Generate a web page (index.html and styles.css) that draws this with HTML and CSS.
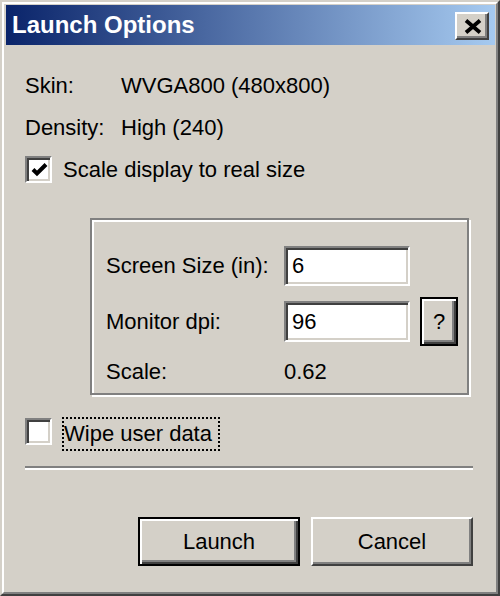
FILE: index.html
```html
<!DOCTYPE html>
<html>
<head>
<meta charset="utf-8">
<title>Launch Options</title>
<link rel="stylesheet" href="styles.css">
</head>
<body>
<div class="window">
  <div class="frame">
    <div class="titlebar">
      <span class="title">Launch Options</span>
      <button class="close" aria-label="Close">
        <svg width="18" height="15" viewBox="0 0 18 15"><path d="M2 1.5 L16 13.5 M16 1.5 L2 13.5" stroke="#000" stroke-width="3.8" fill="none"/></svg>
      </button>
    </div>
    <div class="content">
      <div class="info-row"><span class="info-label">Skin:</span><span>WVGA800 (480x800)</span></div>
      <div class="info-row"><span class="info-label">Density:</span><span>High (240)</span></div>
      <div class="check-row scale-row">
        <span class="checkbox"><svg width="17" height="14" viewBox="0 0 17 14"><polyline points="2,6.5 6,10.5 15,1.5" stroke="#000" stroke-width="4" fill="none"/></svg></span>
        <span>Scale display to real size</span>
      </div>
      <div class="group">
        <span class="label">Screen Size (in):</span>
        <input class="field field-1" type="text" value="6">
        <span></span>
        <span class="label">Monitor dpi:</span>
        <input class="field field-2" type="text" value="96">
        <button class="btn default help">?</button>
        <span class="label">Scale:</span>
        <span class="label">0.62</span>
        <span></span>
      </div>
      <div class="check-row wipe-row">
        <span class="checkbox wipe-box"></span>
        <span class="focus">Wipe user data</span>
      </div>
      <div class="separator"></div>
      <div class="buttons">
        <button class="btn default">Launch</button>
        <button class="btn">Cancel</button>
      </div>
    </div>
  </div>
</div>
</body>
</html>
```
FILE: styles.css
```css
* { box-sizing: border-box; }
html, body { margin: 0; padding: 0; }
body {
  width: 500px;
  height: 596px;
  background: #d4d0c8;
  font-family: "Liberation Sans", Arial, sans-serif;
  font-size: 22px;
  color: #000;
  overflow: hidden;
}
.window {
  width: 500px;
  height: 596px;
  border: 2px solid;
  border-color: #d4d0c8 #404040 #404040 #d4d0c8;
}
.frame {
  height: 100%;
  border: 2px solid;
  border-color: #fff #808080 #808080 #fff;
  padding: 1px 1px 2px 2px;
  display: flex;
  flex-direction: column;
}
.titlebar {
  height: 40px;
  flex: none;
  display: flex;
  align-items: center;
  justify-content: space-between;
  padding: 0 6px;
  background: linear-gradient(to right, #0a246a, #a6caf0);
}
.title {
  color: #fff;
  font-weight: bold;
  font-size: 24px;
  line-height: 40px;
}
.close {
  width: 34px;
  height: 28px;
  margin-top: 2px;
  padding: 0;
  background: #d4d0c8;
  border: 2px solid;
  border-color: #fff #404040 #404040 #fff;
  box-shadow: inset -2px -2px #808080;
  display: flex;
  align-items: center;
  justify-content: center;
}
.close svg { display: block; margin-left: 1px; }
.content {
  flex: 1;
  padding: 28px 22px 0 19px;
  display: flex;
  flex-direction: column;
}
.info-row {
  display: flex;
  line-height: 26px;
}
.info-row + .info-row { margin-top: 16px; }
.info-label { width: 96px; }
.check-row {
  display: flex;
  line-height: 26px;
}
.scale-row {
  margin-top: 15px;
  align-items: center;
  gap: 11px;
}
.checkbox {
  width: 27px;
  height: 27px;
  flex: none;
  border: 2px solid;
  border-color: #808080 #fff #fff #808080;
  background: #fff;
  box-shadow: inset 2px 2px #404040, inset -2px -2px #d4d0c8;
  display: flex;
  align-items: center;
  justify-content: center;
}
.checkbox svg { display: block; margin: 1px 0 0 2px; }
.group {
  margin-top: 35px;
  margin-left: 65px;
  width: 379px;
  height: 177px;
  border: 2px solid #808080;
  box-shadow: inset 2px 2px #fff, 2px 2px #fff;
  padding: 26px 0 0 14px;
  display: grid;
  grid-template-columns: 168px 126px 38px;
  grid-template-rows: 40px 49px 30px;
  column-gap: 10px;
  row-gap: 11px;
  align-items: center;
  align-content: start;
}
.label { line-height: 26px; }
.field {
  width: 126px;
  height: 40px;
  margin: 0;
  padding: 0 0 0 6px;
  font: inherit;
  color: #000;
  background: #fff;
  border: 2px solid;
  border-color: #808080 #fff #fff #808080;
  box-shadow: inset 2px 2px #404040, inset -2px -2px #d4d0c8;
  outline: none;
}
.field-2 { height: 41px; }
.btn {
  width: 162px;
  height: 49px;
  margin: 0;
  padding: 0;
  font: inherit;
  color: #000;
  background: #d4d0c8;
  border: 2px solid;
  border-color: #fff #404040 #404040 #fff;
  box-shadow: inset -2px -2px #808080;
}
.btn.default {
  border: 2px solid #000;
  box-shadow: inset 2px 2px #fff, inset -2px -2px #404040, inset -4px -4px #808080;
}
.help {
  width: 38px;
  height: 49px;
}
.wipe-row {
  margin-top: 22px;
  align-items: flex-start;
  gap: 10px;
}
.wipe-box { margin-top: 1px; }
.focus {
  border: 2px dotted #000;
  line-height: 30px;
  padding: 0 6px 0 0;
}
.separator {
  margin-top: 15px;
  height: 4px;
  border-top: 2px solid #808080;
  border-bottom: 2px solid #fff;
}
.buttons {
  margin-top: 47px;
  display: flex;
  justify-content: flex-end;
  gap: 11px;
}
```
